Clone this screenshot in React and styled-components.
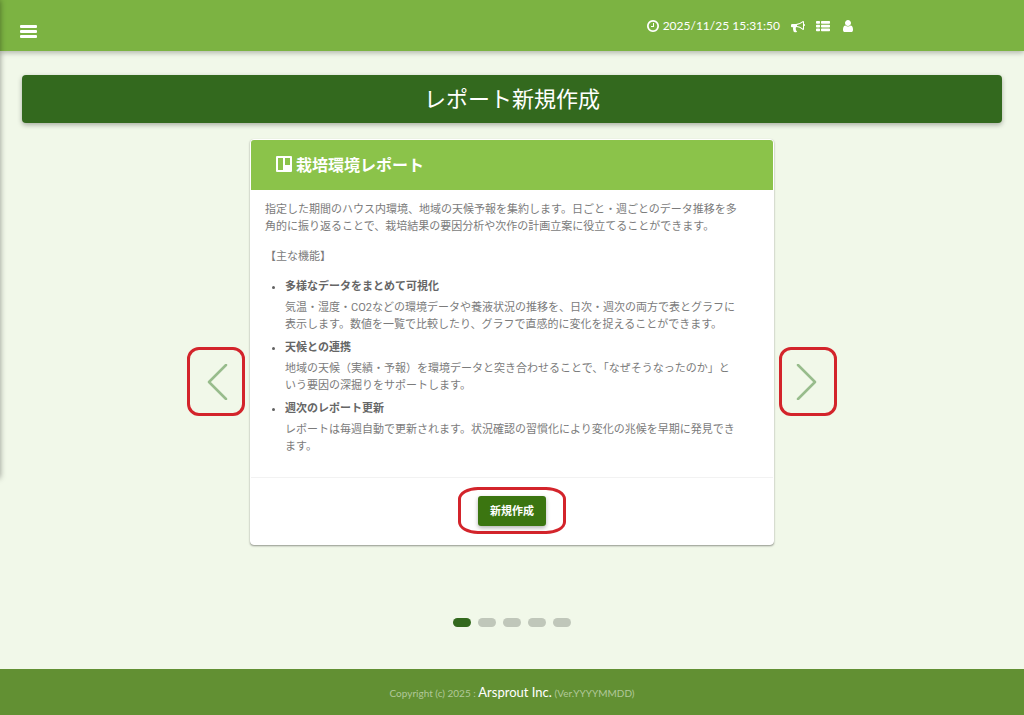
import styled, { createGlobalStyle } from "styled-components";

const GlobalStyle = createGlobalStyle`
    * {
        box-sizing: border-box;
    }
    body {
        margin: 0;
        background: #f1f8e9;
        color: #7b7b7b;
        font-family: Roboto, "Noto Sans CJK JP", sans-serif;
        font-size: 11px;
    }
`

const Page = styled.div`
    display: flex;
    flex-direction: column;
    min-height: 100vh;
`

// closed drawer, only its shadow shows at the left edge
const SideNav = styled.aside`
    position: absolute;
    top: 0;
    left: -240px;
    width: 240px;
    height: 478px;
    box-shadow: 0 0 6px rgba(0, 0, 0, 0.4);
`

const Header = styled.header`
    display: flex;
    justify-content: space-between;
    height: 51px;
    padding: 0 169px 0 20px;
    background: #7cb342;
    box-shadow: 0 2px 5px rgba(0, 0, 0, 0.26);
    color: #fff;
`

const IconButton = styled.button`
    display: flex;
    padding: 0;
    border: 0;
    background: none;
    color: inherit;
    cursor: pointer;
`

const MenuButton = styled(IconButton)`
    align-self: flex-end;
    padding-bottom: 12px;
`

const Tools = styled.div`
    display: flex;
    align-items: center;
    gap: 11px;
`

const Clock = styled.time`
    display: flex;
    align-items: center;
    gap: 3px;
    font-family: Lato, sans-serif;
    font-size: 12px;
`

const Main = styled.main`
    flex: 1;
    padding: 24px 22px 0;
`

const PageTitle = styled.h1`
    margin: 0 0 16px;
    padding-top: 2px;
    border-radius: 4px;
    background: #33691e;
    box-shadow: 0 2px 5px rgba(0, 0, 0, 0.3);
    color: #fff;
    font-size: 22px;
    font-weight: 400;
    line-height: 46px;
    text-align: center;
`

const Carousel = styled.section`
    display: flex;
    justify-content: center;
    align-items: center;
    gap: 5px;
`

const ArrowButton = styled(IconButton)`
    align-items: center;
    justify-content: center;
    width: 58px;
    height: 69px;
    margin-top: 79px;
    border: 3px solid #d3242b;
    border-radius: 12px;
    color: #98bc8c;
`

const Card = styled.article`
    width: 524px;
    border: 1px solid #fff;
    border-radius: 4px;
    background: #fff;
    box-shadow: 0 1px 2px rgba(0, 0, 0, 0.4);
`

const CardTitle = styled.h2`
    display: flex;
    align-items: center;
    gap: 4px;
    height: 50px;
    margin: 0;
    padding: 0 25px 2px;
    border-radius: 3px 3px 0 0;
    background: #8bc34a;
    color: #fff;
    font-size: 16px;
    font-weight: 700;
`

const CardBody = styled.div`
    padding: 11px 28px 16px 14px;
    line-height: 17px;
`

const Text = styled.p`
    margin: 0 0 13px;
`

const Features = styled.ul`
    margin: 0;
    padding: 0 6px 0 20px;
`

const Feature = styled.li`
    margin-bottom: 6px;
    &::marker {
        color: #616161;
    }
`

const FeatureName = styled.strong`
    display: block;
    margin-bottom: 4px;
    color: #666;
    font-weight: 700;
`

const CardFooter = styled.footer`
    display: flex;
    justify-content: center;
    padding: 9px 0 10px;
    border-top: 1px solid #f2f2f2;
`

const Highlight = styled.div`
    display: flex;
    align-items: center;
    justify-content: center;
    width: 108px;
    height: 47px;
    border: 3px solid #d3242b;
    border-radius: 20px / 12px;
`

const CreateButton = styled.button`
    width: 68px;
    height: 30px;
    padding: 0 0 2px;
    border: 0;
    border-radius: 3px;
    background: #3b7510;
    box-shadow: 0 2px 4px rgba(0, 0, 0, 0.3);
    color: #fff;
    font: inherit;
    font-weight: 700;
    cursor: pointer;
`

const Dots = styled.nav`
    display: flex;
    justify-content: center;
    gap: 7px;
    margin-top: 73px;
`

const Dot = styled.button`
    width: 18px;
    height: 9px;
    padding: 0;
    border: 0;
    border-radius: 5px;
    background: ${({ $active }) => ($active ? "#33691e" : "#c0c7ba")};
    cursor: pointer;
`

const Footer = styled.footer`
    height: 46px;
    background: #629033;
    color: #b1c899;
    font-family: Lato, sans-serif;
    font-size: 10px;
    line-height: 46px;
    text-align: center;
`

const Company = styled.a`
    color: #fff;
    font-size: 13px;
    text-decoration: none;
`

const features = [
  {
    name: "多様なデータをまとめて可視化",
    text: "気温・湿度・CO2などの環境データや養液状況の推移を、日次・週次の両方で表とグラフに表示します。数値を一覧で比較したり、グラフで直感的に変化を捉えることができます。",
  },
  {
    name: "天候との連携",
    text: "地域の天候（実績・予報）を環境データと突き合わせることで、「なぜそうなったのか」という要因の深掘りをサポートします。",
  },
  {
    name: "週次のレポート更新",
    text: "レポートは毎週自動で更新されます。状況確認の習慣化により変化の兆候を早期に発見できます。",
  },
];

const slides = [1, 2, 3, 4, 5];

const Icon = ({ d, size = 14 }) => (
  <svg width={size} height={size} viewBox="0 0 1792 1792" fill="currentColor" aria-hidden="true">
    <path d={d} />
  </svg>
);

const CLOCK = "M1024 544v448q0 14-9 23t-23 9H672q-14 0-23-9t-9-23v-64q0-14 9-23t23-9h224V544q0-14 9-23t23-9h64q14 0 23 9t9 23zm416 352q0-148-73-273t-198-198-273-73-273 73-198 198-73 273 73 273 198 198 273 73 273-73 198-198 73-273zm224 0q0 209-103 385.5T1281.5 1561 896 1664t-385.5-103T231 1281.5 128 896t103-385.5T510.5 231 896 128t385.5 103T1561 510.5 1664 896z";
const BULLHORN = "M1664 640q53 0 90.5 37.5T1792 768t-37.5 90.5T1664 896v384q0 52-38 90t-90 38q-417-347-812-380-58 19-91 66t-31 100.5 40 92.5q-20 33-23 65.5t6 58 33.5 55 48 50T768 1606q-29 58-111.5 83t-168.5 11.5-132-55.5q-7-23-29.5-87.5t-32-94.5-23-89-15-101 3.5-98.5 22-110.5H160q-66 0-113-47T0 992V800q0-66 47-113t113-47h480q435 0 896-384 52 0 90 38t38 90v384zm-128 604V418q-394 302-768 343v142q377 43 768 341z";
const LIST = "M96 256h320q96 0 96 96v160q0 96-96 96H96q-96 0-96-96V352q0-96 96-96zM736 256h960q96 0 96 96v160q0 96-96 96H736q-96 0-96-96V352q0-96 96-96zM96 736h320q96 0 96 96v160q0 96-96 96H96q-96 0-96-96V832q0-96 96-96zM736 736h960q96 0 96 96v160q0 96-96 96H736q-96 0-96-96V832q0-96 96-96zM96 1216h320q96 0 96 96v160q0 96-96 96H96q-96 0-96-96v-160q0-96 96-96zM736 1216h960q96 0 96 96v160q0 96-96 96H736q-96 0-96-96v-160q0-96 96-96z";
const USER = "M1536 1399q0 109-62.5 187t-150.5 78H469q-88 0-150.5-78T256 1399q0-85 8.5-160.5t31.5-152 58.5-131 94-89T583 832q131 128 313 128t313-128q76 0 134.5 34.5t94 89 58.5 131 31.5 152 8.5 160.5zm-256-887q0 159-112.5 271.5T896 896 624.5 783.5 512 512t112.5-271.5T896 128t271.5 112.5T1280 512z";

const Arrow = ({ points }) => (
  <svg width="24" height="36" viewBox="0 0 24 36" fill="none" stroke="currentColor" strokeWidth="2.5" strokeLinecap="round" strokeLinejoin="round" aria-hidden="true">
    <polyline points={points} />
  </svg>
);

const App = () => {
  return <Page>
    <GlobalStyle />
    <Header>
      <MenuButton aria-label="メニュー">
        <svg width="17" height="15" viewBox="0 0 17 15" fill="currentColor">
          <rect y="1" width="17" height="3" rx="1" />
          <rect y="6" width="17" height="3" rx="1" />
          <rect y="11" width="17" height="3" rx="1" />
        </svg>
      </MenuButton>
      <Tools>
        <Clock><Icon d={CLOCK} />2025/11/25 15:31:50</Clock>
        <IconButton aria-label="お知らせ"><Icon d={BULLHORN} /></IconButton>
        <IconButton aria-label="一覧"><Icon d={LIST} /></IconButton>
        <IconButton aria-label="ユーザー"><Icon d={USER} /></IconButton>
      </Tools>
    </Header>
    <SideNav />
    <Main>
      <PageTitle>レポート新規作成</PageTitle>
      <Carousel>
        <ArrowButton aria-label="前へ"><Arrow points="22,1 5,18 22,35" /></ArrowButton>
        <Card>
          <CardTitle>
            <svg width="16" height="16" viewBox="0 0 16 16" aria-hidden="true">
              <path fill="currentColor" fillRule="evenodd" d="M1 0h14q1 0 1 1v14q0 1-1 1H1q-1 0-1-1V1q0-1 1-1zM2 2v12h5V2zM9 2v7h5V2z" />
            </svg>
            栽培環境レポート
          </CardTitle>
          <CardBody>
            <Text>指定した期間のハウス内環境、地域の天候予報を集約します。日ごと・週ごとのデータ推移を多角的に振り返ることで、栽培結果の要因分析や次作の計画立案に役立てることができます。</Text>
            <Text>【主な機能】</Text>
            <Features>
              {features.map(({ name, text }) => (
                <Feature key={name}>
                  <FeatureName>{name}</FeatureName>
                  {text}
                </Feature>
              ))}
            </Features>
          </CardBody>
          <CardFooter>
            <Highlight>
              <CreateButton>新規作成</CreateButton>
            </Highlight>
          </CardFooter>
        </Card>
        <ArrowButton aria-label="次へ"><Arrow points="2,1 19,18 2,35" /></ArrowButton>
      </Carousel>
      <Dots>
        {slides.map((n) => <Dot key={n} $active={n === 1} aria-label={`スライド ${n}`} />)}
      </Dots>
    </Main>
    <Footer>
      Copyright (c) 2025 : <Company href="#">Arsprout Inc.</Company> (Ver.YYYYMMDD)
    </Footer>
  </Page>;
};

export default App;
